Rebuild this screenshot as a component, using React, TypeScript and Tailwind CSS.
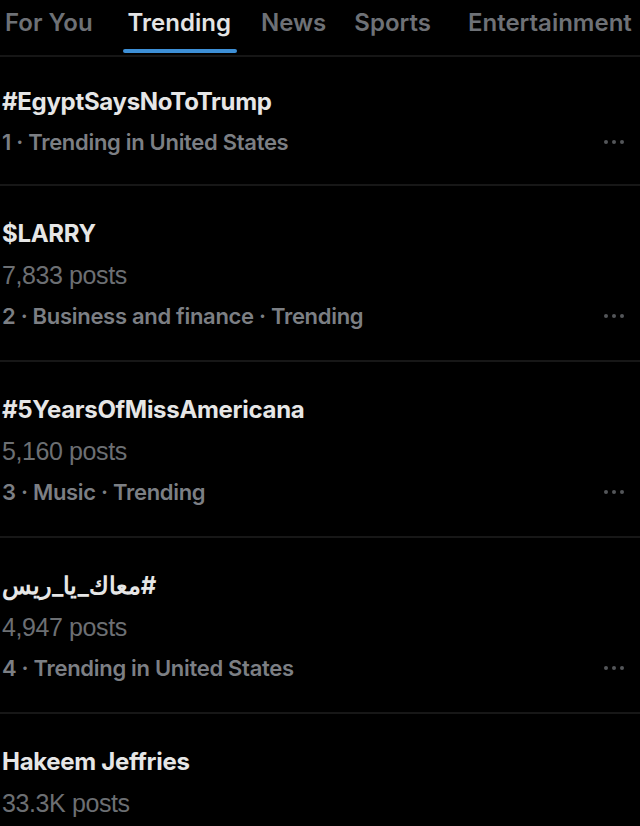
import React from 'react';

interface Trend {
  title: string;
  posts?: string;
  meta?: string;
  rtl?: boolean;
}

const tabs = [
  { label: 'For You', cls: 'ml-[5px] mr-[35px]' },
  { label: 'Trending', cls: 'mr-[30px]' },
  { label: 'News', cls: 'mr-[28px]' },
  { label: 'Sports', cls: 'mr-[37px]' },
  { label: 'Entertainment', cls: '' },
];

const trends: Trend[] = [
  { title: '#EgyptSaysNoToTrump', meta: '1 · Trending in United States' },
  { title: '$LARRY', posts: '7,833 posts', meta: '2 · Business and finance · Trending' },
  { title: '#5YearsOfMissAmericana', posts: '5,160 posts', meta: '3 · Music · Trending' },
  { title: '#معاك_يا_ريس', posts: '4,947 posts', meta: '4 · Trending in United States', rtl: true },
  { title: 'Hakeem Jeffries', posts: '33.3K posts' },
];

const Dots = () => (
  <div className="flex items-center gap-[4px] opacity-60">
    <span className="w-[4px] h-[4px] rounded-full bg-[#8b8f94]" />
    <span className="w-[4px] h-[4px] rounded-full bg-[#8b8f94]" />
    <span className="w-[4px] h-[4px] rounded-full bg-[#8b8f94]" />
  </div>
);

export default function App() {
  return (
    <div className="w-[640px] h-[826px] bg-black overflow-hidden font-['Inter','Noto_Sans',sans-serif]">
      {/* Tabs */}
      <div className="h-[57px] flex items-start border-b-2 border-[#161616] whitespace-nowrap">
        {tabs.map((t) => {
          const active = t.label === 'Trending';
          return (
            <div
              key={t.label}
              className={`relative shrink-0 text-[24px] font-semibold pt-[5px] ${t.cls} ${
                active ? 'text-[#e4e4e4]' : 'text-[#6e7176]'
              }`}
            >
              <span>{t.label}</span>
              {active && (
                <div className="absolute left-[-5px] top-[49px] w-[114px] h-[4px] rounded-full bg-[#3d8fd6]" />
              )}
            </div>
          );
        })}
      </div>

      {/* Trend list */}
      <div className="flex flex-col">
        {trends.map((tr, i) => (
          <div
            key={i}
            className={`flex items-end justify-between pl-[2px] pr-[16px] ${
              i === 0 ? 'pt-[30px] pb-[27px]' : 'pt-[33px] pb-[29px]'
            } ${i < trends.length - 1 ? 'border-b-2 border-[#171717]' : ''}`}
          >
            <div className="flex flex-col items-start">
              <div
                className="text-[24px] font-bold text-[#e6e6e6] leading-[30px] tracking-[-0.3px]"
                dir={tr.rtl ? 'rtl' : undefined}
              >
                {tr.title}
              </div>
              {tr.posts && (
                <div className="mt-[11px] text-[25px] text-[#6c6f73] leading-[30px] font-['Liberation_Sans',sans-serif] tracking-[-0.4px]">
                  {tr.posts}
                </div>
              )}
              {tr.meta && (
                <div
                  className={`${i === 0 ? 'mt-[10px]' : 'mt-[11px]'} text-[22px] font-semibold text-[#7c7f84] leading-[30px] tracking-[-0.3px]`}
                >
                  {tr.meta}
                </div>
              )}
            </div>
            {tr.meta && (
              <div className="mb-[13px]">
                <Dots />
              </div>
            )}
          </div>
        ))}
      </div>
    </div>
  );
}
